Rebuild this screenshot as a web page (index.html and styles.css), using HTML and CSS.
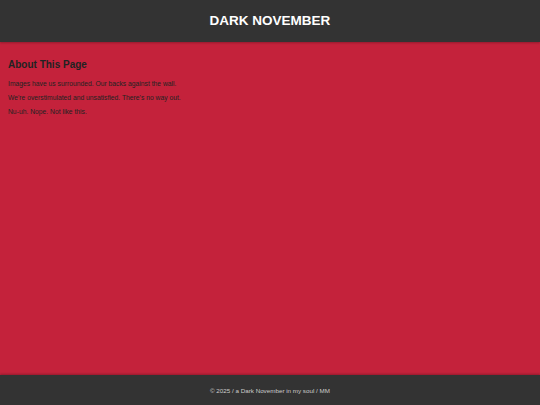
FILE: index.html
```html
<!DOCTYPE html>
<html lang="en">
<head>
<meta charset="utf-8">
<title>Dark November</title>
<link rel="stylesheet" href="styles.css">
</head>
<body>
  <header class="site-header">
    <h1 class="site-title">DARK NOVEMBER</h1>
  </header>
  <main class="content">
    <h2 class="content-title">About This Page</h2>
    <p class="content-text">Images have us surrounded. Our backs against the wall.</p>
    <p class="content-text">We're overstimulated and unsatisfied. There's no way out.</p>
    <p class="content-text">Nu-uh. Nope. Not like this.</p>
  </main>
  <footer class="site-footer">
    <p class="footer-text">&copy; 2025 / a Dark November in my soul / MM</p>
  </footer>
</body>
</html>
```
FILE: styles.css
```css
html, body {
  height: 100%;
}

body {
  margin: 0;
  display: flex;
  flex-direction: column;
  min-height: 100vh;
  font-family: "Liberation Sans", Arial, sans-serif;
  background: #c4223b;
  color: #222;
}

/* top bar with the site name */
.site-header {
  flex: 0 0 42px;
  background: #333;
  display: flex;
  align-items: center;
  justify-content: center;
  box-shadow: 0 1px 2px rgba(0, 0, 0, 0.25);
  position: relative;
  z-index: 1;
}

.site-title {
  margin: 0;
  color: #fff;
  font-size: 13.5px;
  font-weight: bold;
  line-height: 1;
}

.content {
  flex: 1;
  padding: 8px;
}

.content-title {
  font-size: 10px;
  font-weight: bold;
  margin: 9px 0 10px;
}

.content-text {
  font-size: 6.75px;
  line-height: 7.5px;
  margin: 6.5px 0;
}

.site-footer {
  flex: 0 0 30px;
  background: #333;
  display: flex;
  align-items: center;
  justify-content: center;
  box-shadow: 0 -1px 2px rgba(0, 0, 0, 0.25);
}

.footer-text {
  margin: 0;
  color: #ccc;
  font-size: 6.25px;
}
```
